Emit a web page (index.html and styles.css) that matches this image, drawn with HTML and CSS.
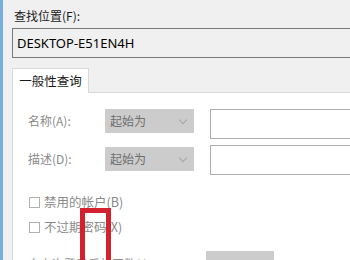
FILE: index.html
```html
<!DOCTYPE html>
<html lang="zh-CN">
<head>
    <meta charset="UTF-8">
    <meta name="viewport" content="width=device-width, initial-scale=1.0">
    <title>查找用户</title>
    <link rel="stylesheet" href="styles.css">
</head>
<body>
    <div class="ventana">
        <label class="etiqueta">查找位置(F):</label>
        <div class="ubicacion">DESKTOP-E51EN4H</div>

        <div class="pestanas">
            <div class="pestana">一般性查询</div>
        </div>
        <div class="panel">
            <div class="fila">
                <span class="nombre">名称(A):</span>
                <div class="combo">起始为<span class="flecha"></span></div>
                <div class="campo"></div>
            </div>
            <div class="fila fila-dos">
                <span class="nombre">描述(D):</span>
                <div class="combo">起始为<span class="flecha"></span></div>
                <div class="campo"></div>
            </div>
            <div class="opciones">
                <div class="opcion"><span class="casilla"></span>禁用的帐户(B)</div>
                <div class="opcion"><span class="casilla"></span>不过期密码(X)</div>
            </div>
            <div class="fila-dias">
                <span class="nombre">自上次登录后的天数(I):</span>
                <div class="boton-dias"></div>
            </div>
        </div>
    </div>
    <div class="marca"></div>
</body>
</html>
```

FILE: styles.css
```css
*{
    margin: 0;
    padding: 0;
    box-sizing: border-box;
}
body{
    width: 350px;
    height: 260px;
    overflow: hidden;
    position: relative;
    background: #f0f0f0;
    font-family: "Noto Sans CJK SC", "Noto Sans", sans-serif;
    font-size: 12px;
    color: #1a1a1a;
}
.ventana{
    height: 100%;
    border-left: 3px solid #78ade0;
    padding: 8px 0 0 9px;
    display: flex;
    flex-direction: column;
}
.etiqueta{
    display: block;
    line-height: 16px;
    padding-left: 2px;
}
.ubicacion{
    margin-top: 4px;
    width: 400px;
    height: 30px;
    border: 1px solid #7a7a7a;
    padding-left: 4px;
    font-family: "Noto Sans", "Noto Sans CJK SC", sans-serif;
    font-size: 13px;
    line-height: 28px;
    color: #000;
}
.pestanas{
    margin-top: 10px;
    display: flex;
}
.pestana{
    width: 77px;
    height: 25px;
    background: #fff;
    border: 1px solid #d9d9d9;
    border-bottom: none;
    text-align: center;
    line-height: 23px;
    font-size: 12.5px;
    position: relative;
    z-index: 1;
    margin-bottom: -1px;
}
.panel{
    flex: 1;
    width: 420px;
    background: #fff;
    border: 1px solid #d9d9d9;
    padding: 16px 0 0 15px;
    color: #8a8a8a;
}
.fila{
    display: flex;
    align-items: flex-start;
    height: 30px;
}
.fila-dos{
    margin-top: 6px;
}
.nombre{
    width: 77px;
    line-height: 24px;
}
.fila-dos .nombre,
.fila-dos .combo{
    margin-top: 2px;
}
.combo{
    width: 89px;
    height: 24px;
    background: #cccccc;
    color: #6e6e6e;
    padding-left: 5px;
    line-height: 24px;
    position: relative;
}
.flecha{
    position: absolute;
    right: 8px;
    top: 8px;
    width: 6px;
    height: 6px;
    border-right: 1px solid #a6a6a6;
    border-bottom: 1px solid #a6a6a6;
    transform: rotate(45deg);
}
.campo{
    margin-left: 16px;
    width: 200px;
    height: 30px;
    border: 1px solid #adadad;
    background: #fff;
}
.opciones{
    margin-top: 19px;
    padding-left: 1px;
    display: flex;
    flex-direction: column;
    gap: 9px;
}
.opcion{
    display: flex;
    align-items: center;
    gap: 4px;
    line-height: 16px;
    font-size: 12.5px;
}
.casilla{
    width: 11px;
    height: 11px;
    border: 1px solid #b0b0b0;
    background: #fff;
}
.fila-dias{
    margin-top: 16px;
    display: flex;
    align-items: flex-start;
}
.fila-dias .nombre{
    width: 178px;
    line-height: 16px;
    margin-top: 5px;
}
.boton-dias{
    width: 68px;
    height: 24px;
    background: #cccccc;
}
.marca{
    position: absolute;
    left: 80px;
    top: 208px;
    width: 31px;
    height: 70px;
    border: 5px solid #d3212d;
}
```
